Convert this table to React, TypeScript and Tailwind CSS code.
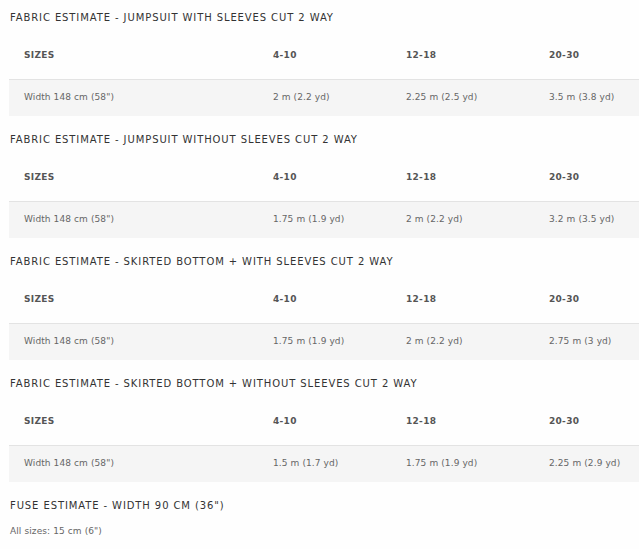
import React from "react";

type Section = { title: string; values: [string, string, string] };

const sections: Section[] = [
  { title: "FABRIC ESTIMATE - JUMPSUIT WITH SLEEVES CUT 2 WAY", values: ["2 m (2.2 yd)", "2.25 m (2.5 yd)", "3.5 m (3.8 yd)"] },
  { title: "FABRIC ESTIMATE - JUMPSUIT WITHOUT SLEEVES CUT 2 WAY", values: ["1.75 m (1.9 yd)", "2 m (2.2 yd)", "3.2 m (3.5 yd)"] },
  { title: "FABRIC ESTIMATE - SKIRTED BOTTOM + WITH SLEEVES CUT 2 WAY", values: ["1.75 m (1.9 yd)", "2 m (2.2 yd)", "2.75 m (3 yd)"] },
  { title: "FABRIC ESTIMATE - SKIRTED BOTTOM + WITHOUT SLEEVES CUT 2 WAY", values: ["1.5 m (1.7 yd)", "1.75 m (1.9 yd)", "2.25 m (2.9 yd)"] },
];

const font = { fontFamily: '"DejaVu Sans", "Open Sans", sans-serif' };

export default function App() {
  return (
    <div className="w-[639px] h-[549px] overflow-hidden bg-[#fefefe]" style={font}>
      <div className="pt-[11px]">
        {sections.map((s, i) => (
          <div key={i} className="mb-[17px]">
            <div className="pl-[10px] h-[14px] leading-[14px] text-[10px] font-normal tracking-[0.9px] text-[#333] whitespace-nowrap">
              {s.title}
            </div>
            <div className="ml-[9px] mt-[7px] w-[640px]">
              <div className="grid grid-cols-[249px_133px_143px_1fr] h-[48px] items-center border-b border-[#e3e3e3] text-[9px] font-bold text-[#555] tracking-[0.3px]">
                <div className="pl-[15px]">SIZES</div>
                <div className="pl-[15px]">4-10</div>
                <div className="pl-[15px]">12-18</div>
                <div className="pl-[15px]">20-30</div>
              </div>
              <div className="grid grid-cols-[249px_133px_143px_1fr] h-[36px] items-center bg-[#f5f5f5] text-[9px] text-[#666] tracking-[0.1px]">
                <div className="pl-[15px]">Width 148 cm (58")</div>
                <div className="pl-[15px]">{s.values[0]}</div>
                <div className="pl-[15px]">{s.values[1]}</div>
                <div className="pl-[15px]">{s.values[2]}</div>
              </div>
            </div>
          </div>
        ))}
        <div className="pl-[10px] h-[14px] leading-[14px] text-[10px] font-normal tracking-[0.9px] text-[#333] whitespace-nowrap">
          FUSE ESTIMATE - WIDTH 90 CM (36")
        </div>
        <div className="pl-[10px] mt-[12px] text-[9px] text-[#666] leading-[12px] tracking-[0.1px]">All sizes: 15 cm (6")</div>
      </div>
    </div>
  );
}
